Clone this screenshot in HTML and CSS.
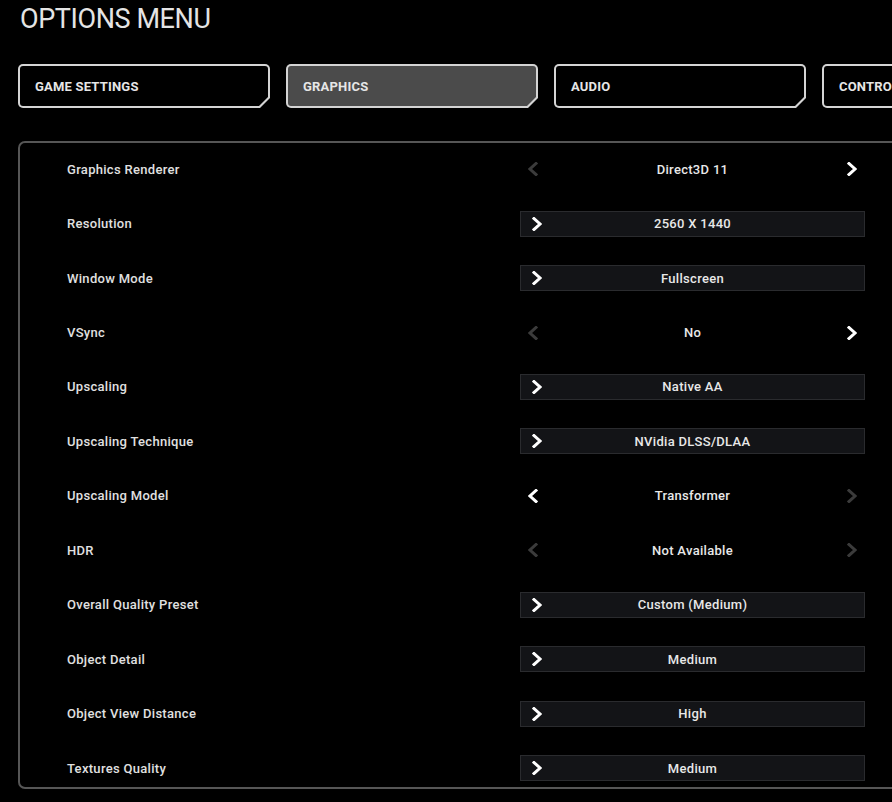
FILE: index.html
```html
<!DOCTYPE html>
<html lang="en">
<head>
<meta charset="utf-8">
<title>Options Menu</title>
<link rel="stylesheet" href="styles.css">
</head>
<body>
<svg width="0" height="0" class="defs">
  <defs>
    <symbol id="chev-r" viewBox="0 0 10 14"><path d="M2 1.5 L8 7 L2 12.5" fill="none" stroke="currentColor" stroke-width="3" stroke-linecap="square" stroke-linejoin="miter"/></symbol>
    <symbol id="chev-l" viewBox="0 0 10 14"><path d="M8 1.5 L2 7 L8 12.5" fill="none" stroke="currentColor" stroke-width="3" stroke-linecap="square" stroke-linejoin="miter"/></symbol>
  </defs>
</svg>
<div class="screen">
  <h1 class="title">OPTIONS MENU</h1>
  <nav class="tabs">
    <div class="tab"><div class="tab-inner">GAME SETTINGS</div></div>
    <div class="tab active"><div class="tab-inner">GRAPHICS</div></div>
    <div class="tab"><div class="tab-inner">AUDIO</div></div>
    <div class="tab"><div class="tab-inner">CONTROLS</div></div>
  </nav>
  <section class="panel">
    <div class="rows">
      <div class="row">
        <div class="label">Graphics Renderer</div>
        <div class="stepper">
          <svg class="chev off"><use href="#chev-l"/></svg>
          <span class="value">Direct3D 11</span>
          <svg class="chev"><use href="#chev-r"/></svg>
        </div>
      </div>
      <div class="row">
        <div class="label">Resolution</div>
        <div class="select"><svg class="chev"><use href="#chev-r"/></svg><span class="value">2560 X 1440</span></div>
      </div>
      <div class="row">
        <div class="label">Window Mode</div>
        <div class="select"><svg class="chev"><use href="#chev-r"/></svg><span class="value">Fullscreen</span></div>
      </div>
      <div class="row">
        <div class="label">VSync</div>
        <div class="stepper">
          <svg class="chev off"><use href="#chev-l"/></svg>
          <span class="value">No</span>
          <svg class="chev"><use href="#chev-r"/></svg>
        </div>
      </div>
      <div class="row">
        <div class="label">Upscaling</div>
        <div class="select"><svg class="chev"><use href="#chev-r"/></svg><span class="value">Native AA</span></div>
      </div>
      <div class="row">
        <div class="label">Upscaling Technique</div>
        <div class="select"><svg class="chev"><use href="#chev-r"/></svg><span class="value">NVidia DLSS/DLAA</span></div>
      </div>
      <div class="row">
        <div class="label">Upscaling Model</div>
        <div class="stepper">
          <svg class="chev"><use href="#chev-l"/></svg>
          <span class="value">Transformer</span>
          <svg class="chev off"><use href="#chev-r"/></svg>
        </div>
      </div>
      <div class="row">
        <div class="label">HDR</div>
        <div class="stepper">
          <svg class="chev off"><use href="#chev-l"/></svg>
          <span class="value">Not Available</span>
          <svg class="chev off"><use href="#chev-r"/></svg>
        </div>
      </div>
      <div class="row">
        <div class="label">Overall Quality Preset</div>
        <div class="select"><svg class="chev"><use href="#chev-r"/></svg><span class="value">Custom (Medium)</span></div>
      </div>
      <div class="row">
        <div class="label">Object Detail</div>
        <div class="select"><svg class="chev"><use href="#chev-r"/></svg><span class="value">Medium</span></div>
      </div>
      <div class="row">
        <div class="label">Object View Distance</div>
        <div class="select"><svg class="chev"><use href="#chev-r"/></svg><span class="value">High</span></div>
      </div>
      <div class="row">
        <div class="label">Textures Quality</div>
        <div class="select"><svg class="chev"><use href="#chev-r"/></svg><span class="value">Medium</span></div>
      </div>
    </div>
  </section>
</div>
</body>
</html>
```

FILE: styles.css
```css
html, body {
  margin: 0;
  padding: 0;
  background: #000;
}
body {
  width: 892px;
  height: 802px;
  overflow: hidden;
  font-family: Roboto, "Liberation Sans", sans-serif;
  color: #e2e2e2;
}
.defs {
  position: absolute;
  width: 0;
  height: 0;
}
.screen {
  display: flex;
  flex-direction: column;
}
.title {
  margin: 0;
  padding: 1px 0 0 20px;
  font-size: 27px;
  line-height: 36px;
  font-weight: 400;
  letter-spacing: -0.4px;
  color: #e4e4e4;
}
.tabs {
  display: flex;
  gap: 16px;
  margin-top: 27px;
  padding-left: 18px;
}
.tab {
  flex: 0 0 252px;
  height: 44px;
  background: #d4d4d4;
  border-radius: 5px;
  clip-path: polygon(0 0, 100% 0, 100% calc(100% - 10px), calc(100% - 10px) 100%, 0 100%);
  display: flex;
}
.tab-inner {
  flex: 1;
  margin: 2px;
  background: #000;
  border-radius: 3px;
  clip-path: polygon(0 0, 100% 0, 100% calc(100% - 9px), calc(100% - 9px) 100%, 0 100%);
  display: flex;
  align-items: center;
  padding-left: 15px;
  font-size: 13px;
  font-weight: 700;
  letter-spacing: 0.2px;
  color: #e6e6e6;
}
.tab.active .tab-inner {
  background: #4b4b4b;
}
.panel {
  margin: 33px 0 0 18px;
  width: 900px;
  height: 644px;
  border: 2px solid #565656;
  border-radius: 7px;
  overflow: hidden;
  flex-shrink: 0;
}
.rows {
  display: flex;
  flex-direction: column;
  margin-top: -1px;
}
.row {
  height: 54.45px;
  display: grid;
  grid-template-columns: 453px 345px;
  align-items: center;
  padding-left: 47px;
}
.label {
  font-size: 13px;
  font-weight: 500;
  letter-spacing: 0.3px;
  color: #e0e0e0;
}
.value {
  font-size: 13px;
  font-weight: 500;
  letter-spacing: 0.3px;
  color: #e8e8e8;
}
.chev {
  width: 10px;
  height: 14px;
  color: #fff;
  flex-shrink: 0;
}
.chev.off {
  color: #3b3b3b;
}
.select {
  height: 24px;
  background: #131417;
  border: 1px solid #2a2b2e;
  display: grid;
  grid-template-columns: 30px 1fr 30px;
  align-items: center;
}
.select .chev {
  justify-self: center;
  margin-left: 2px;
}
.select .value {
  text-align: center;
}
.stepper {
  height: 26px;
  display: grid;
  grid-template-columns: 26px 1fr 26px;
  align-items: center;
}
.stepper .chev {
  justify-self: center;
}
.stepper .value {
  text-align: center;
}
```
